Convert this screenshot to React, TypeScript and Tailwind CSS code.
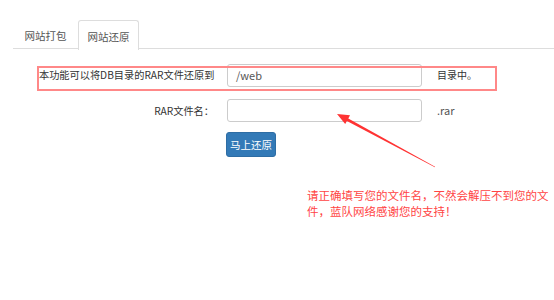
import React from "react";

export default function App() {
  const cjk = { fontFamily: '"Noto Sans CJK SC", "Noto Sans", sans-serif' };
  return (
    <div className="relative w-[554px] h-[300px] bg-white text-[#333] overflow-hidden" style={cjk}>
      {/* Tabs */}
      <div className="pt-[20px] pl-[13px]">
        <div className="flex h-[29px] border-b border-[#ddd]">
          <div className="w-[65px] flex items-center justify-center pt-[3px] text-[10.5px] text-[#555]">网站打包</div>
          <div className="w-[61px] h-[30px] flex items-center justify-center pt-[3px] text-[10.5px] text-[#555] bg-white border border-[#ddd] border-b-0 rounded-t-[3px]">
            网站还原
          </div>
        </div>
      </div>

      {/* Form */}
      <div className="mt-[15px] flex flex-col">
        <div className="relative flex items-center h-[23px]">
          <div className="absolute left-[37px] top-[2px] w-[460px] h-[25px] border-2 border-[#f88]" />
          <div className="ml-[39px] w-[188px] text-[10.2px] pb-[2px]">本功能可以将DB目录的RAR文件还原到</div>
          <div className="w-[195px] h-[23px] border border-[#ccc] rounded-[3px] flex items-center pl-[8px] text-[11px] text-[#555]">/web</div>
          <div className="ml-[15px] text-[10px] pb-[2px]">目录中。</div>
        </div>

        <div className="mt-[12px] flex items-center h-[23px]">
          <div className="ml-[39px] w-[176px] text-right text-[10.2px] pr-[1px]">RAR文件名：</div>
          <div className="ml-[12px] w-[195px] h-[23px] border border-[#ccc] rounded-[3px]" />
          <div className="ml-[15px] text-[11px] text-[#555]">.rar</div>
        </div>

        <div className="mt-[10px] ml-[226px]">
          <div className="w-[50px] h-[25px] bg-[#337ab7] border border-[#2e6da4] rounded-[3px] flex items-center justify-center text-white text-[10.5px]">
            马上还原
          </div>
        </div>

        <div className="mt-[30px] ml-[307px] text-[11.5px] leading-[16px] text-[#f44]">
          请正确填写您的文件名，不然会解压不到您的文<br />件，蓝队网络感谢您的支持！
        </div>
      </div>

      {/* Arrow annotation */}
      <svg className="absolute left-0 top-0" width="554" height="300" viewBox="0 0 554 300">
        <polygon
          points="337,114 350,115.3 348.3,118.4 435.1,166.7 434.9,167.3 346.9,121 345.2,124.1"
          fill="#f33"
        />
      </svg>
    </div>
  );
}
